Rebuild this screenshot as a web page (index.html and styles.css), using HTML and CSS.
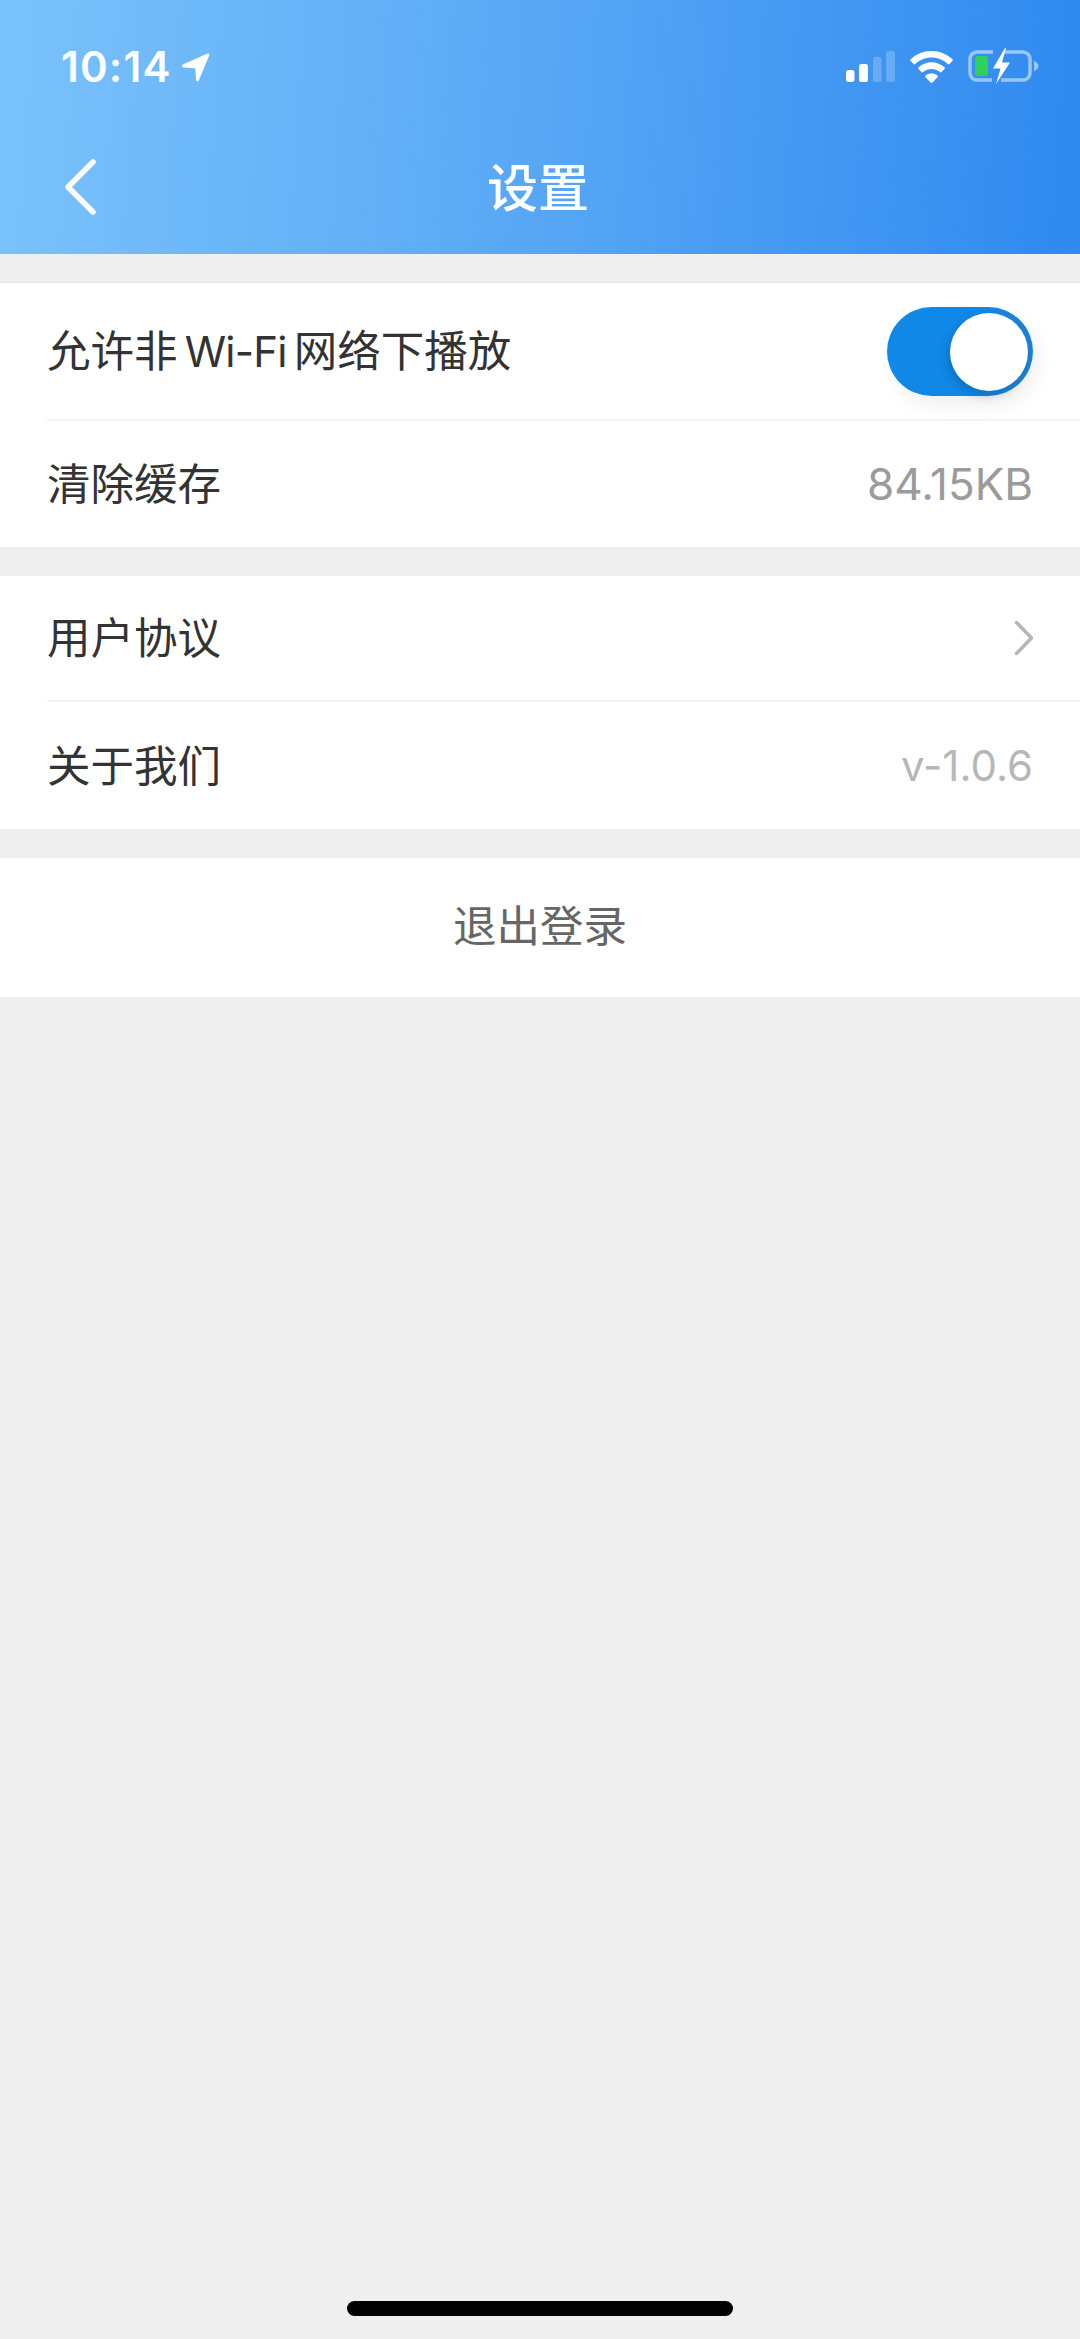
FILE: index.html
```html
<!DOCTYPE html>
<html lang="zh-CN">
<head>
  <meta charset="UTF-8" />
  <title>设置</title>
  <meta name="viewport" content="width=device-width, initial-scale=1" />
  <link rel="stylesheet" href="styles.css">
</head>
<body>
  <header class="topbar">
    <div class="status">
      <div class="status-left">
        <span class="time">10:14</span>
        <svg class="loc" width="29" height="29" viewBox="0 0 29 29">
          <path d="M1.800 11.600 26.600.6c1.100-.5 2.200.6 1.700 1.700L17.800 27.500c-.6 1.300-2.400 1-2.600-.4l-.9-10.900c-.1-.5-.4-.8-.9-.9L2.300 14.600c-1.500-.2-1.800-2.300-.5-3z" fill="#fff"/>
        </svg>
      </div>
      <div class="status-right">
        <svg class="signal" width="49" height="31" viewBox="0 0 49 31">
          <rect x="0" y="19" width="8.500" height="12" rx="2.500" fill="#fff"/>
          <rect x="13" y="13" width="9" height="18" rx="2.500" fill="#fff"/>
          <rect x="27" y="6" width="8.500" height="25" rx="2.500" fill="#fff" opacity=".22"/>
          <rect x="40" y="0" width="9" height="31" rx="2.500" fill="#fff" opacity=".22"/>
        </svg>
        <svg class="wifi" width="43" height="32" viewBox="0 0 43 32">
          <path d="M21.500 0C13.300 0 6 3.200.6 8.300c-.5.500-.5 1.200 0 1.700l3 3.100c.5.500 1.200.5 1.700 0C9.500 9.100 15.200 6.600 21.500 6.600s12 2.500 16.200 6.500c.5.500 1.200.5 1.700 0l3-3.100c.5-.5.5-1.200 0-1.700C37 3.200 29.700 0 21.500 0z" fill="#fff"/>
          <path d="M21.500 11.200c-5 0-9.600 2-13 5.100-.5.500-.5 1.200 0 1.700l3 3.100c.5.500 1.200.5 1.700 0 2.200-2 5.100-3.200 8.300-3.200s6.100 1.200 8.300 3.200c.5.500 1.200.5 1.700 0l3-3.100c.5-.5.5-1.200 0-1.700-3.400-3.100-8-5.100-13-5.100z" fill="#fff"/>
          <path d="M21.500 22.300c-2.300 0-4.400.9-6 2.300-.5.500-.5 1.200 0 1.700l5.100 5.200c.5.500 1.300.500 1.800 0l5.100-5.200c.5-.5.500-1.200 0-1.700-1.600-1.400-3.700-2.300-6-2.300z" fill="#fff"/>
        </svg>
        <svg class="battery" width="71" height="36" viewBox="0 0 71 36">
          <path d="M25 4H9a7 7 0 0 0-7 7v14a7 7 0 0 0 7 7h15M36 4h19a7 7 0 0 1 7 7v14a7 7 0 0 1-7 7H33" fill="none" stroke="#fff" stroke-opacity=".5" stroke-width="3.500"/>
          <rect x="7" y="8" width="13" height="20" rx="3" fill="#2fd158"/>
          <path d="M66 13c2.500.8 4.500 2.600 4.500 5s-2 4.200-4.500 5z" fill="#fff" opacity=".5"/>
          <path d="M37 0 25 20.500h7.500L28 36l14-21.500h-8L38 0z" fill="#fff"/>
        </svg>
      </div>
    </div>
    <nav class="navbar">
      <svg class="back" width="32" height="56" viewBox="0 0 32 56">
        <path d="M28 3 3 28l25 25" fill="none" stroke="#fff" stroke-width="5.500" stroke-linecap="round" stroke-linejoin="round"/>
      </svg>
      <h1 class="title">设置</h1>
    </nav>
  </header>

  <main class="content">
    <section class="group group-first">
      <div class="row row-tall">
        <span class="label label-mixed">允许非 <span class="latin">Wi-Fi</span> 网络下播放</span>
        <span class="toggle"><span class="knob"></span></span>
      </div>
      <div class="row row-last row-short">
        <span class="label">清除缓存</span>
        <span class="value">84.15KB</span>
      </div>
    </section>

    <section class="group">
      <div class="row">
        <span class="label">用户协议</span>
        <svg class="more" width="20" height="36" viewBox="0 0 20 36">
          <path d="M2.500 2.500 17.500 18l-15 15.500" fill="none" stroke="#b6b6b6" stroke-width="3.500" stroke-linecap="round" stroke-linejoin="round"/>
        </svg>
      </div>
      <div class="row row-last">
        <span class="label">关于我们</span>
        <span class="value value-light">v-1.0.6</span>
      </div>
    </section>

    <section class="group">
      <div class="logout">退出登录</div>
    </section>
  </main>

  <div class="home-bar"></div>
</body>
</html>
```

FILE: styles.css
```css
:root {
  --bg: #efefef;
  --text: #333333;
  --line: #f3f3f3;
  --font: Inter, "Noto Sans CJK SC", sans-serif;
}
* {
  box-sizing: border-box;
}
body {
  margin: 0;
  min-height: 2339px;
  display: flex;
  flex-direction: column;
  background: var(--bg);
  color: var(--text);
  font-family: var(--font);
}
.topbar {
  height: 254px;
  background: linear-gradient(94deg, #7ac2fb 0%, #5fadf6 40%, #2f89ef 100%);
  color: #fff;
}
.status {
  height: 126px;
  padding: 48px 41px 0 61px;
  display: flex;
  justify-content: space-between;
  align-items: flex-start;
}
.status-left {
  display: flex;
  align-items: center;
  gap: 9px;
}
.time {
  font-size: 42px;
  font-weight: 600;
  line-height: 38px;
  letter-spacing: 1.200px;
}
.status-right {
  display: flex;
  align-items: center;
  gap: 15px;
  padding-top: 1px;
}
.battery {
  margin-top: -1px;
}
.navbar {
  height: 128px;
  padding-left: 65px;
  display: flex;
  align-items: center;
  position: relative;
}
.back {
  margin-top: -6px;
}
.title {
  position: absolute;
  left: 0;
  right: 4px;
  top: 26px;
  margin: 0;
  text-align: center;
  font-size: 51px;
  line-height: 74px;
  font-weight: 500;
}
.content {
  display: flex;
  flex-direction: column;
  gap: 29px;
  padding-top: 28px;
}
.group {
  background: #fff;
}
.group-first {
  border-top: 1px solid #e4e4e4;
}
.row {
  height: 126px;
  margin-left: 47px;
  padding-right: 47px;
  display: flex;
  justify-content: space-between;
  align-items: center;
  border-bottom: 2px solid var(--line);
}
.row-tall {
  height: 138px;
}
.row-last {
  height: 127px;
  border-bottom: none;
}
.row-short {
  height: 126px;
}
.label {
  font-size: 43.500px;
  line-height: 60px;
}
.label-mixed {
  word-spacing: -5px;
}
.latin {
  font-size: 42px;
  letter-spacing: -0.800px;
}
.value {
  font-size: 44px;
  line-height: 60px;
  color: #9b9b9b;
}
.value-light {
  font-size: 42px;
  color: #b7b7b7;
}
.toggle {
  width: 146px;
  height: 89px;
  padding: 6px 5px;
  border-radius: 45px;
  background: linear-gradient(90deg, #1088e8 0%, #1088e8 60%, #2080d2 100%);
  box-shadow: 6px 10px 20px rgba(0, 0, 0, 0.06);
  display: flex;
  justify-content: flex-end;
}
.knob {
  width: 78px;
  height: 78px;
  border-radius: 50%;
  background: #fff;
  box-shadow: -3px 5px 10px rgba(0, 40, 90, 0.22);
}
.more {
  margin-right: -1px;
}
.logout {
  height: 139px;
  padding-bottom: 8px;
  display: flex;
  align-items: center;
  justify-content: center;
  font-size: 43.500px;
  color: #666666;
}
.home-bar {
  width: 386px;
  height: 15px;
  margin: auto 0 23px 347px;
  border-radius: 8px;
  background: #000;
}
```
